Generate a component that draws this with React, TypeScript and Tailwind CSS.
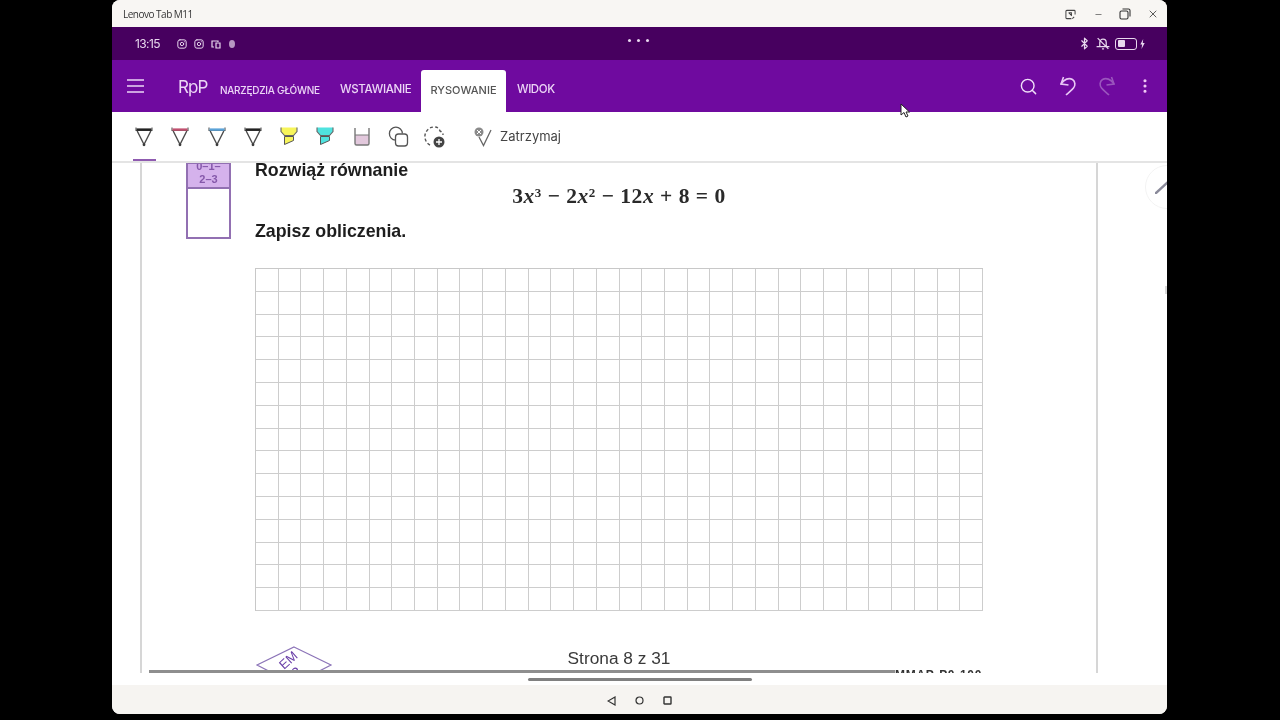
import React from 'react';
import { Instagram, Search, MoreVertical, Bluetooth, X, Minus } from 'lucide-react';

function Pen({ color }: { color: string }) {
  return (
    <svg width="20" height="22" viewBox="0 0 20 22" fill="none">
      <path d="M2 1.5v3h16v-3" stroke="#555" strokeWidth="1.1" />
      <rect x="2.5" y="2.4" width="15" height="2.4" fill={color} />
      <path d="M3.2 5 10 18.5 16.8 5" stroke="#4a4a4a" strokeWidth="1.4" strokeLinejoin="round" />
      <circle cx="10" cy="18.8" r="1.4" fill="#3a3a3a" />
    </svg>
  );
}

function Highlighter({ color }: { color: string }) {
  return (
    <svg width="20" height="22" viewBox="0 0 20 22" fill="none">
      <path d="M2 1.5v4l3.5 4h9l3.5-4v-4z" fill={color} />
      <path d="M2 1.5v4l3.5 4h9l3.5-4v-4" stroke="#666" strokeWidth="1.1" />
      <path d="M5.5 10.5h9v4l-9 4z" fill={color} stroke="#555" strokeWidth="1" />
    </svg>
  );
}

function Bucket() {
  return (
    <svg width="20" height="22" viewBox="0 0 20 22" fill="none">
      <path d="M3 9h14v8.5a1.5 1.5 0 0 1-1.5 1.5h-11A1.5 1.5 0 0 1 3 17.5z" fill="#e2c8dc" />
      <path d="M3 9h14" stroke="#777" strokeWidth="1.2" />
      <path d="M3 2v15.5A1.5 1.5 0 0 0 4.5 19h11a1.5 1.5 0 0 0 1.5-1.5V2" stroke="#777" strokeWidth="1.4" />
    </svg>
  );
}

function Shapes() {
  return (
    <svg width="22" height="22" viewBox="0 0 22 22" fill="none" stroke="#555" strokeWidth="1.3">
      <path d="M7.5 14.2A6.5 6.5 0 1 1 14.4 7.5" />
      <rect x="7.5" y="8" width="12" height="12" rx="3" />
    </svg>
  );
}

function Lasso() {
  return (
    <svg width="24" height="24" viewBox="0 0 24 24" fill="none">
      <path d="M7 20C3 18 1.5 14 2 10 3 5 7 2 11 2c3 0 5 1 6 4 2 1 3 2 3 4" stroke="#555" strokeWidth="1.4" strokeDasharray="3 2.2" />
      <circle cx="16" cy="17" r="5.5" fill="#444" />
      <path d="M16 14v6M13 17h6" stroke="#fff" strokeWidth="1.3" />
    </svg>
  );
}

function StopIcon() {
  return (
    <svg width="20" height="22" viewBox="0 0 20 22" fill="none">
      <circle cx="6" cy="6" r="4.5" fill="#8a8a8a" />
      <path d="M4 4l4 4M8 4l-4 4" stroke="#fff" strokeWidth="1" />
      <path d="M6 11l4.5 8.5L18 4" stroke="#666" strokeWidth="1.3" />
    </svg>
  );
}

function Undo({ color, flip }: { color: string; flip?: boolean }) {
  return (
    <svg width="20" height="22" viewBox="0 0 20 22" fill="none" stroke={color} strokeWidth="1.6" className={flip ? '-scale-x-100' : ''}>
      <path d="M5.5 2 3 9l7.5 1" />
      <path d="M3 9C6 4 11 2.5 14.5 4.5 17.5 6.5 17.5 10.5 15.5 13 13.5 15.5 10 18 8 20" />
    </svg>
  );
}

function Diamond() {
  return (
    <svg width="78" height="40" viewBox="0 0 78 40" fill="none">
      <path d="M39 1 76 19 39 38 2 19z" stroke="#8c74b8" strokeWidth="1.2" />
      <text x="29" y="24" transform="rotate(-42 29 24)" fontSize="13" fontFamily="Liberation Sans" fill="#6a3fa8">EM</text>
      <text x="42" y="33" transform="rotate(-42 42 33)" fontSize="15" fontFamily="Liberation Sans" fill="#6a3fa8">3</text>
    </svg>
  );
}

const cells = Array.from({ length: 32 * 15 });

export default function App() {
  return (
    <div className="h-screen w-full bg-black pl-[112px] font-['Inter',sans-serif] overflow-hidden">
      <div className="relative w-[1055px] h-[714px] rounded-lg overflow-hidden bg-white flex flex-col blur-[0.4px]">
        {/* title bar */}
        <div className="h-[27px] pt-px bg-[#f8f6f3] flex items-center pl-[11px] pr-[8px] text-[#333]">
          <span className="text-[10px] tracking-[-0.5px] font-['Open_Sans',sans-serif]">Lenovo Tab M11</span>
          <div className="ml-auto flex items-center gap-[15px]">
            <svg width="11" height="11" viewBox="0 0 12 12" fill="none" stroke="#444" strokeWidth="1.1">
              <path d="M7 10.5H2a1 1 0 0 1-1-1v-7a1 1 0 0 1 1-1h8a1 1 0 0 1 1 1V6" />
              <path d="M4 4h3v3M4 4l3.5 3.5M8 10.5l2-2" />
            </svg>
            <Minus size={9} strokeWidth={1.6} className="ml-[3px]" />
            <svg width="12" height="12" viewBox="0 0 12 12" fill="none" stroke="#333" strokeWidth="1.1" className="ml-[1px]">
              <rect x="1" y="3" width="8" height="8" rx="1.5" />
              <path d="M3.5 1H9.5A1.5 1.5 0 0 1 11 2.5V8.5" />
            </svg>
            <X size={12} strokeWidth={1.6} className="ml-[1px]" />
          </div>
        </div>

        {/* android status bar */}
        <div className="relative h-[33px] bg-[#47005f] flex items-center pl-[23px] pr-[78px] text-[#e8d8ee]">
          <span className="text-[12px] tracking-[-0.6px] w-[42px]">13:15</span>
          <div className="flex items-center gap-[7px]">
            <Instagram size={10} strokeWidth={2.4} />
            <Instagram size={10} strokeWidth={2.4} />
            <svg width="10" height="10" viewBox="0 0 10 10" fill="none" stroke="currentColor" strokeWidth="1.2">
              <path d="M3 8H1V2h6v1M5 4h4v5H5z" />
            </svg>
            <svg width="8" height="10" viewBox="0 0 8 10" fill="currentColor" opacity="0.7">
              <ellipse cx="4" cy="5" rx="3" ry="4" />
            </svg>
          </div>
          <div className="absolute left-[516px] top-[12px] flex gap-[6px]">
            <span className="w-[3px] h-[3px] rounded-full bg-[#e8d8ee]" />
            <span className="w-[3px] h-[3px] rounded-full bg-[#e8d8ee]" />
            <span className="w-[3px] h-[3px] rounded-full bg-[#e8d8ee]" />
          </div>
          <div className="ml-auto flex items-center gap-[3px] -mr-[56px]">
            <Bluetooth size={13} strokeWidth={2.2} />
            <svg width="16" height="15" viewBox="0 0 14 14" fill="none" stroke="currentColor" strokeWidth="1.2" className="ml-[1px]">
              <path d="M4 10V6a3 3 0 0 1 6 0v4M1 10h12M6 12h2M2 2l10 10" />
            </svg>
            <span className="ml-[1px] w-[22px] h-[12px] rounded-[3px] border border-[#e8d8ee] p-[1.5px] flex">
              <span className="w-[7px] bg-[#e8d8ee] rounded-[1px]" />
            </span>
            <svg width="5" height="10" viewBox="0 0 5 10" fill="currentColor">
              <path d="M3.2 0 .3 5.6h1.8L1.5 10l3.2-6H2.8z" />
            </svg>
          </div>
        </div>

        {/* ribbon */}
        <div className="h-[52px] bg-[#6f0a9f] flex items-end pl-[15px] pr-[13px] text-[#ecd6f6]">
          <div className="h-full flex items-center w-[51px]">
            <svg width="18" height="14" viewBox="0 0 18 14" stroke="currentColor" strokeWidth="1.5">
              <path d="M0 1h17M0 7h17M0 13h17" />
            </svg>
          </div>
          <div className="h-full flex items-center text-[17px] tracking-[-0.9px] w-[42px] pt-[3px]">RpP</div>
          <div className="h-[42px] pb-[2px] flex items-center text-[10px] font-medium w-[120px] tracking-[-0.27px]">NARZĘDZIA GŁÓWNE</div>
          <div className="h-[42px] pb-[2px] flex items-center text-[11.5px] font-medium w-[81px] tracking-[-0.3px]">WSTAWIANIE</div>
          <div className="h-[42px] pb-[2px] w-[85px] bg-white rounded-t-[3px] flex items-center justify-center text-[#555] text-[11px] font-medium">RYSOWANIE</div>
          <div className="h-[42px] pb-[2px] flex items-center text-[11.5px] font-medium pl-[11px] tracking-[-0.4px]">WIDOK</div>
          <div className="ml-auto h-full flex items-center gap-[19.5px]">
            <Search size={19} strokeWidth={1.8} className="text-[#f0dff8] mr-[1px]" />
            <div className="-mr-[1px]"><Undo color="#e8c6f5" /></div>
            <Undo color="#9a55bd" flip />
            <MoreVertical size={18} strokeWidth={2.2} className="text-[#f0c8f5]" />
          </div>
        </div>

        {/* draw toolbar */}
        <div className="h-[51px] bg-white border-b-2 border-[#e4e4e4] flex items-center pl-[22px] pt-[1px] z-10">
          <div className="relative w-[36.3px] h-full flex items-center">
            <Pen color="#222" />
            <span className="absolute left-[-1px] bottom-[0px] w-[23px] h-[2px] bg-[#8f5bb0]" />
          </div>
          <div className="w-[36.3px]"><Pen color="#c0506f" /></div>
          <div className="w-[36.3px]"><Pen color="#5ba3d8" /></div>
          <div className="w-[36.3px]"><Pen color="#222" /></div>
          <div className="w-[36.3px]"><Highlighter color="#f7f55a" /></div>
          <div className="w-[36.3px]"><Highlighter color="#4fe3df" /></div>
          <div className="w-[36.3px]"><Bucket /></div>
          <div className="w-[35px]"><Shapes /></div>
          <div className="w-[50px]"><Lasso /></div>
          <StopIcon />
          <span className="ml-[7px] text-[13px] text-[#444]">Zatrzymaj</span>
        </div>

        {/* document */}
        <div className="relative flex-1 overflow-hidden bg-white">
          <div className="ml-[28px] w-[958px] h-full border-x-2 border-[#d6d6d6] pl-[44px] font-['Liberation_Sans',sans-serif]">
            <div className="flex">
              <div className="w-[45px] h-[77px] -mt-[1px] border-2 border-[#9270b2] flex flex-col">
                <div className="h-[25px] bg-[#d5b2ec] border-b-2 border-[#9270b2] text-[11px] leading-[13px] text-[#8558aa] text-center font-bold overflow-hidden">
                  <div className="-mt-[4px]">0–1–</div>
                  <div>2–3</div>
                </div>
              </div>
              <div className="ml-[24px] w-[728px]">
                <div className="text-[17.8px] leading-[14px] font-bold text-[#1d1d1d]">Rozwiąż równanie</div>
                <div className="mt-[7px] text-center text-[21.5px] tracking-[0.5px] leading-[24px] font-bold text-[#2a2a2a] font-['Liberation_Serif',serif]">
                  3<i>x</i><sup className="text-[13px]">3</sup> − 2<i>x</i><sup className="text-[13px]">2</sup> − 12<i>x</i> + 8 = 0
                </div>
                <div className="mt-[14px] text-[17.8px] leading-[18px] font-bold text-[#1d1d1d]">Zapisz obliczenia.</div>
                <div className="mt-[28px] grid grid-cols-[repeat(32,22.72px)] grid-rows-[repeat(15,22.8px)] border-t border-l border-[#c8c8c8] w-[728px]">
                  {cells.map((_, i) => (
                    <div key={i} className="border-r border-b border-[#cdcdcd]" />
                  ))}
                </div>
                <div className="mt-[36px] text-center text-[17.3px] leading-[22px] text-[#3a3a3a]">Strona 8 z 31</div>
              </div>
            </div>
          </div>

          {/* overlays at the bottom edge of the page */}
          <div className="absolute left-[143px] top-[483px]"><Diamond /></div>
          <div className="absolute left-[37px] bottom-0 w-[746px] h-[3px] bg-[#8e8e8e]" />
          <div className="absolute left-[783px] top-[506px] text-[12px] leading-[12px] font-bold tracking-[0.7px] text-[#333] font-['Liberation_Sans',sans-serif]">MMAP-P0-100</div>

          {/* floating pen */}
          <div className="absolute -right-[22px] top-[2px] w-[44px] h-[44px] rounded-full bg-white border border-[#f3f3f3] flex items-center pl-[9px]">
            <svg width="14" height="14" viewBox="0 0 14 14" stroke="#8a8a9a" strokeWidth="2.4"><path d="M0 14 14 1" /></svg>
          </div>
          <div className="absolute right-0 top-[123px] w-[2px] h-[8px] bg-[#d8d8d8]" />
        </div>

        {/* android nav */}
        <div className="relative h-[41px] bg-[#f6f4f1] flex items-center justify-center gap-[19px] pt-[14px]">
          <div className="absolute inset-x-0 top-0 h-[12px] bg-white" />
          <div className="absolute left-[416px] top-[5px] w-[224px] h-[3px] rounded-full bg-[#808080]" />
          <svg width="9" height="10" viewBox="0 0 9 10" fill="none" stroke="#333" strokeWidth="1.2"><path d="M8 1v8L1 5z" /></svg>
          <svg width="9" height="9" viewBox="0 0 9 9" fill="none" stroke="#333" strokeWidth="1.2"><circle cx="4.5" cy="4.5" r="3.5" /></svg>
          <svg width="9" height="9" viewBox="0 0 9 9" fill="none" stroke="#333" strokeWidth="1.4"><rect x="1" y="1" width="7" height="7" rx="0.5" /></svg>
        </div>

        {/* mouse cursor */}
        <svg className="absolute left-[788px] top-[103px] z-20" width="10" height="15" viewBox="0 0 10 15">
          <path d="M1 1v11l3-2.5 2 4.5 2-1-2-4h3.5z" fill="#fff" stroke="#222" strokeWidth="1" />
        </svg>
      </div>
    </div>
  );
}
